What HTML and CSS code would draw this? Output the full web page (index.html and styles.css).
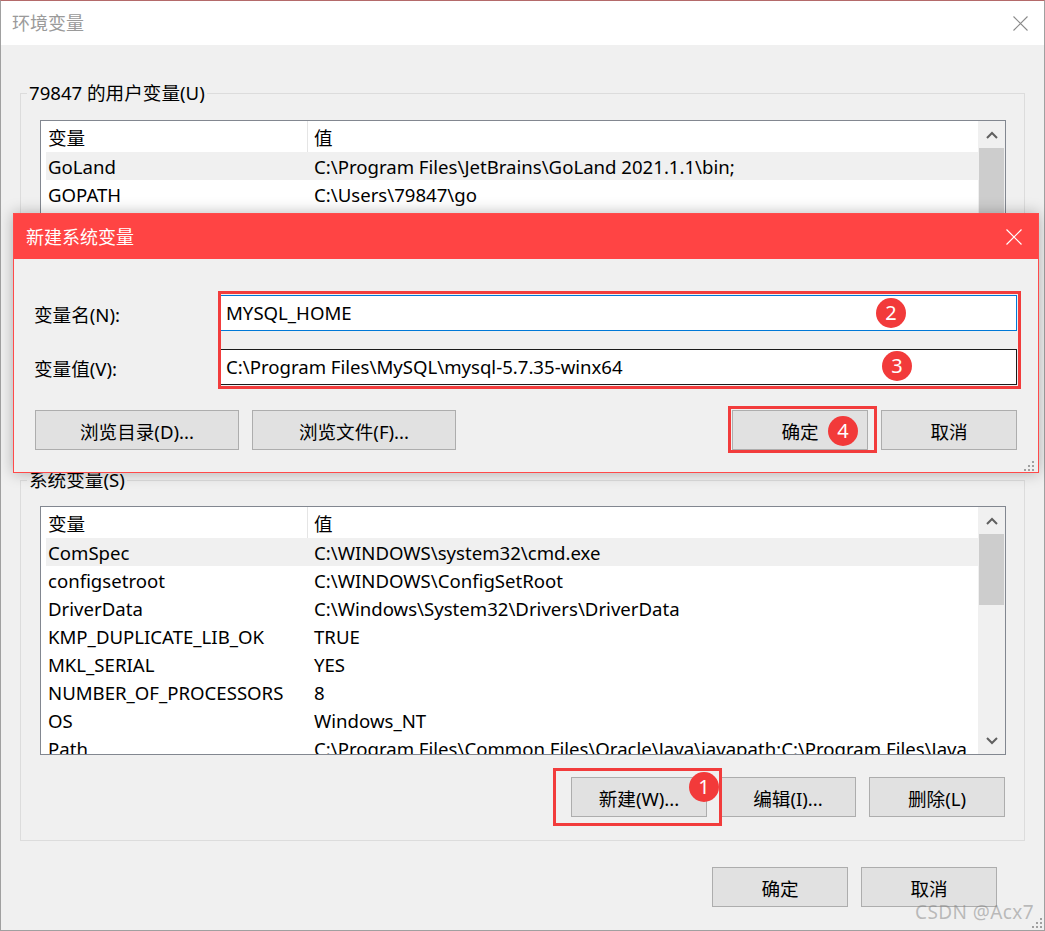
FILE: index.html
```html
<!DOCTYPE html>
<html lang="zh-CN">
<head>
<meta charset="utf-8">
<title>环境变量</title>
<link rel="stylesheet" href="styles.css">
</head>
<body>
<div class="window">
  <div class="titlebar">
    <span class="title">环境变量</span>
    <svg class="close-x" viewBox="0 0 15 15" width="15" height="15"><path d="M0.5 0.5 L14.5 14.5 M14.5 0.5 L0.5 14.5" stroke="#8a8a8a" stroke-width="1.1" fill="none"/></svg>
  </div>
  <div class="content">
    <fieldset class="group user-group">
      <legend>79847 的用户变量(U)</legend>
      <div class="group-body">
        <div class="list">
          <div class="list-main">
            <div class="list-head"><div class="head-name">变量</div><div class="head-val">值</div></div>
            <div class="row sel"><div class="cell-name">GoLand</div><div class="cell-val">C:\Program Files\JetBrains\GoLand 2021.1.1\bin;</div></div>
            <div class="row"><div class="cell-name">GOPATH</div><div class="cell-val">C:\Users\79847\go</div></div>
            <div class="row"><div class="cell-name">OneDrive</div><div class="cell-val">C:\Users\79847\OneDrive</div></div>
            <div class="row"><div class="cell-name">Path</div><div class="cell-val">C:\Users\79847\AppData\Local\Microsoft\WindowsApps;</div></div>
            <div class="row"><div class="cell-name">PyCharm</div><div class="cell-val">C:\Program Files\JetBrains\PyCharm 2021.1\bin;</div></div>
            <div class="row"><div class="cell-name">TEMP</div><div class="cell-val">C:\Users\79847\AppData\Local\Temp</div></div>
            <div class="row"><div class="cell-name">TMP</div><div class="cell-val">C:\Users\79847\AppData\Local\Temp</div></div>
          </div>
          <div class="scrollbar">
            <div class="sb-arrow"><svg width="12" height="8" viewBox="0 0 12 8"><path d="M1 7 L6 2 L11 7" stroke="#606060" stroke-width="2" fill="none"/></svg></div>
            <div class="sb-thumb tall"></div>
            <div class="sb-track"></div>
            <div class="sb-arrow"><svg width="12" height="8" viewBox="0 0 12 8"><path d="M1 1 L6 6 L11 1" stroke="#606060" stroke-width="2" fill="none"/></svg></div>
          </div>
        </div>
        <div class="btn-row">
          <button class="btn">新建(N)...</button>
          <button class="btn">编辑(E)...</button>
          <button class="btn">删除(D)</button>
        </div>
      </div>
    </fieldset>

    <fieldset class="group sys-group">
      <legend>系统变量(S)</legend>
      <div class="group-body">
        <div class="list">
          <div class="list-main">
            <div class="list-head"><div class="head-name">变量</div><div class="head-val">值</div></div>
            <div class="row sel"><div class="cell-name">ComSpec</div><div class="cell-val">C:\WINDOWS\system32\cmd.exe</div></div>
            <div class="row"><div class="cell-name">configsetroot</div><div class="cell-val">C:\WINDOWS\ConfigSetRoot</div></div>
            <div class="row"><div class="cell-name">DriverData</div><div class="cell-val">C:\Windows\System32\Drivers\DriverData</div></div>
            <div class="row"><div class="cell-name">KMP_DUPLICATE_LIB_OK</div><div class="cell-val">TRUE</div></div>
            <div class="row"><div class="cell-name">MKL_SERIAL</div><div class="cell-val">YES</div></div>
            <div class="row"><div class="cell-name">NUMBER_OF_PROCESSORS</div><div class="cell-val">8</div></div>
            <div class="row"><div class="cell-name">OS</div><div class="cell-val">Windows_NT</div></div>
            <div class="row"><div class="cell-name">Path</div><div class="cell-val">C:\Program Files\Common Files\Oracle\Java\javapath;C:\Program Files\Java</div></div>
          </div>
          <div class="scrollbar">
            <div class="sb-arrow"><svg width="12" height="8" viewBox="0 0 12 8"><path d="M1 7 L6 2 L11 7" stroke="#606060" stroke-width="2" fill="none"/></svg></div>
            <div class="sb-thumb"></div>
            <div class="sb-track"></div>
            <div class="sb-arrow"><svg width="12" height="8" viewBox="0 0 12 8"><path d="M1 1 L6 6 L11 1" stroke="#606060" stroke-width="2" fill="none"/></svg></div>
          </div>
        </div>
        <div class="btn-row">
          <button class="btn">新建(W)...</button>
          <button class="btn">编辑(I)...</button>
          <button class="btn">删除(L)</button>
        </div>
      </div>
    </fieldset>

    <div class="footer">
      <button class="btn">确定</button>
      <button class="btn">取消</button>
    </div>
  </div>

  <div class="watermark">CSDN @Acx7</div>
  <svg class="grip win-grip" width="10" height="10" viewBox="0 0 10 10"><g fill="#a0a0a0"><rect x="8" y="0" width="2" height="2"/><rect x="4" y="4" width="2" height="2"/><rect x="8" y="4" width="2" height="2"/><rect x="0" y="8" width="2" height="2"/><rect x="4" y="8" width="2" height="2"/><rect x="8" y="8" width="2" height="2"/></g></svg>

  <div class="dialog">
    <div class="dlg-titlebar">
      <span class="dlg-title">新建系统变量</span>
      <svg class="close-x" viewBox="0 0 16 16" width="16" height="16"><path d="M0.5 0.5 L15.5 15.5 M15.5 0.5 L0.5 15.5" stroke="#ffffff" stroke-width="1.2" fill="none"/></svg>
    </div>
    <div class="dlg-body">
      <div class="field">
        <label class="field-label">变量名(N):</label>
        <div class="input focused">MYSQL_HOME</div>
      </div>
      <div class="field">
        <label class="field-label">变量值(V):</label>
        <div class="input hover">C:\Program Files\MySQL\mysql-5.7.35-winx64</div>
      </div>
      <div class="dlg-buttons">
        <button class="btn wide">浏览目录(D)...</button>
        <button class="btn wide">浏览文件(F)...</button>
        <div class="spacer"></div>
        <button class="btn">确定</button>
        <button class="btn">取消</button>
      </div>
    </div>
    <svg class="grip dlg-grip" width="10" height="10" viewBox="0 0 10 10"><g fill="#a0a0a0"><rect x="8" y="0" width="2" height="2"/><rect x="4" y="4" width="2" height="2"/><rect x="8" y="4" width="2" height="2"/><rect x="0" y="8" width="2" height="2"/><rect x="4" y="8" width="2" height="2"/><rect x="8" y="8" width="2" height="2"/></g></svg>
  </div>

  <div class="mark-rect mr-inputs"></div>
  <div class="mark-rect mr-ok"></div>
  <div class="mark-rect mr-new"></div>
  <div class="badge b2">2</div>
  <div class="badge b3">3</div>
  <div class="badge b4">4</div>
  <div class="badge b1">1</div>
</div>
</body>
</html>
```

FILE: styles.css
```css
* { box-sizing: border-box; }
html, body { margin: 0; padding: 0; }
body {
  width: 1045px;
  height: 931px;
  overflow: hidden;
  background: #f0f0f0;
  font-family: "Noto Sans", "Noto Sans CJK SC", sans-serif;
  font-size: 18.6px;
  color: #000;
}

.window {
  position: relative;
  width: 1045px;
  height: 931px;
  background: #f0f0f0;
  border: 1px solid #a0a0a0;
  border-top-color: #b46a6a;
  display: flex;
  flex-direction: column;
}

.titlebar {
  flex: none;
  height: 44px;
  background: #fff;
  display: flex;
  align-items: center;
  justify-content: space-between;
  padding: 0 16px 0 11px;
}
.title { color: #9a9a9a; line-height: 1; font-size: 18px; }
.close-x { display: block; flex: none; }

.content {
  flex: 1;
  display: flex;
  flex-direction: column;
}

.group {
  margin: 0 19px;
  padding: 0;
  border: 1px solid #dcdcdc;
  min-width: 0;
}
.user-group { margin-top: 35px; }
.sys-group { margin-top: 12px; }
.group legend {
  margin-left: 6px;
  padding: 0 2px;
  line-height: 26px;
  height: 26px;
}
.group-body { padding: 13px 18px 23px 19px; }
.user-group .group-body { padding-top: 14px; }

.list {
  height: 249px;
  border: 1px solid #828790;
  background: #fff;
  display: flex;
}
.list-main {
  flex: 1;
  min-width: 0;
  overflow: hidden;
  white-space: nowrap;
}
.list-head {
  height: 31px;
  display: flex;
  align-items: stretch;
}
.head-name {
  width: 267px;
  flex: none;
  padding-left: 7px;
  border-right: 1px solid #e5e5e5;
  display: flex;
  align-items: center;
}
.head-val {
  padding-left: 6px;
  display: flex;
  align-items: center;
}
.row {
  height: 28px;
  margin-left: 5px;
  display: flex;
  align-items: center;
}
.row.sel { background: #f0f0f0; }
.cell-name { width: 262px; flex: none; padding-left: 2px; }
.cell-val { padding-left: 6px; }

.scrollbar {
  width: 27px;
  flex: none;
  background: #f0f0f0;
  display: flex;
  flex-direction: column;
}
.sb-arrow {
  height: 27px;
  flex: none;
  display: flex;
  align-items: center;
  justify-content: center;
}
.sb-arrow svg { display: block; }
.sb-thumb {
  height: 71px;
  flex: none;
  margin: 0 1px;
  background: #cdcdcd;
}
.sb-thumb.tall { height: 120px; }
.sb-track { flex: 1; }

.btn {
  width: 136px;
  height: 40px;
  flex: none;
  margin: 0;
  padding: 0;
  background: #e1e1e1;
  border: 1px solid #adadad;
  font: inherit;
  color: #000;
  display: flex;
  align-items: center;
  justify-content: center;
}
.btn.wide { width: 204px; }

.btn-row {
  display: flex;
  justify-content: flex-end;
  gap: 13px;
  margin-top: 22px;
  padding-right: 1px;
}

.footer {
  display: flex;
  justify-content: flex-end;
  gap: 13px;
  margin-top: 26px;
  padding-right: 47px;
}

.watermark {
  position: absolute;
  left: 914px;
  top: 898px;
  font-size: 19px;
  color: rgba(130, 130, 130, 0.5);
  line-height: 26px;
  letter-spacing: 0.4px;
}
.grip { position: absolute; display: block; }
.win-grip { right: 2px; bottom: 2px; }

/* Dialog overlay */
.dialog {
  position: absolute;
  left: 12px;
  top: 212px;
  width: 1026px;
  height: 260px;
  background: #f0f0f0;
  border: 1px solid #ff4a4a;
  box-shadow: 0 0 14px rgba(0, 0, 0, 0.28);
  display: flex;
  flex-direction: column;
}
.dlg-titlebar {
  flex: none;
  height: 45px;
  background: #ff4444;
  color: #fff;
  display: flex;
  align-items: center;
  justify-content: space-between;
  padding: 0 16px 0 12px;
}
.dlg-title { line-height: 1; font-size: 18px; }
.dlg-body {
  flex: 1;
  padding: 36px 21px 0 20px;
  display: flex;
  flex-direction: column;
}
.field {
  display: flex;
  align-items: center;
  height: 36px;
}
.field + .field { margin-top: 18px; }
.field-label { width: 186px; flex: none; }
.input {
  flex: 1;
  height: 36px;
  background: #fff;
  border: 1px solid #7a7a7a;
  padding: 0 5px 2px;
  display: flex;
  align-items: center;
  white-space: nowrap;
}
.input.focused { border-color: #0078d7; }
.input.hover { border-color: #1a1a1a; }
.dlg-buttons {
  display: flex;
  gap: 13px;
  margin-top: 25px;
  padding-left: 1px;
}
.dlg-buttons .spacer { flex: 1; }
.dlg-grip { right: 4px; bottom: 1px; }

/* Annotations */
.mark-rect {
  position: absolute;
  border: 3px solid #f23c3c;
}
.mr-inputs { left: 217px; top: 290px; width: 803px; height: 98px; }
.mr-ok { left: 727px; top: 405px; width: 149px; height: 47px; }
.mr-new { left: 552px; top: 767px; width: 169px; height: 58px; }

.badge {
  position: absolute;
  width: 30px;
  height: 30px;
  border-radius: 50%;
  background: #f23a3a;
  color: #fff;
  font-size: 20px;
  line-height: 30px;
  text-align: center;
}
.b2 { left: 875px; top: 297px; }
.b3 { left: 881px; top: 350px; }
.b4 { left: 827px; top: 415px; }
.b1 { left: 688px; top: 771px; }
```
